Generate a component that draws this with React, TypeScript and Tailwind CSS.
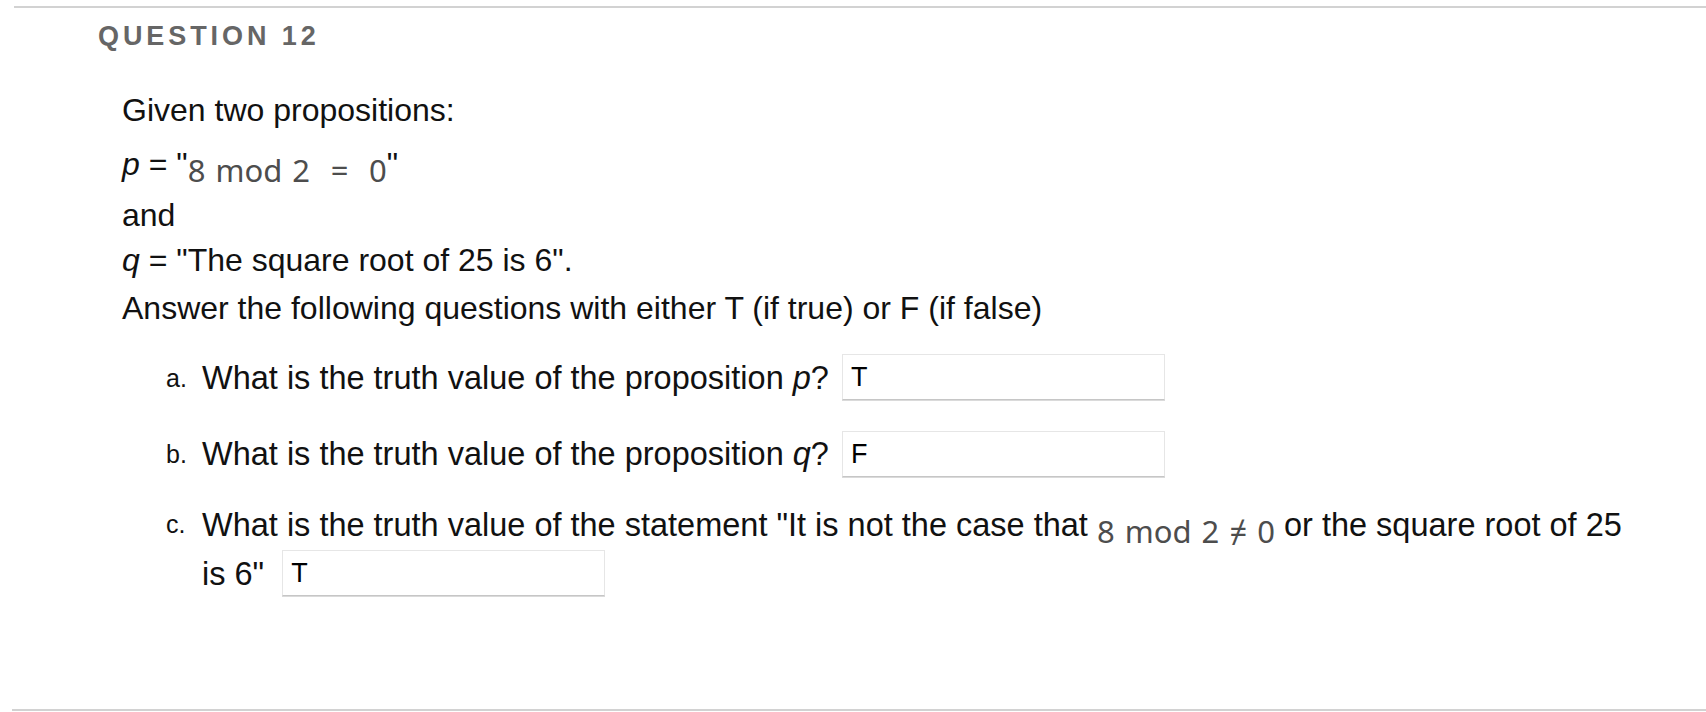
const MATH =
  "font-['Noto_Sans',sans-serif] text-[31px] text-[#4d4d4d] [word-spacing:2px] relative top-[7px]";

function Answer({ value, width }: { value: string; width: string }) {
  return (
    <span
      className={`inline-flex items-center h-[46px] ${width} border border-[#e6e6e6] border-b-[#c6c6c6] shadow-[0_1px_0_#dadada] bg-white pl-[8px] align-middle relative -top-[3px] text-[27px] text-black`}
    >
      {value}
    </span>
  );
}

export default function App() {
  return (
    <div className="w-[1706px] h-[712px] bg-white flex flex-col font-['Liberation_Sans',Arial,sans-serif] text-[#111]">
      {/* top rule */}
      <div className="ml-[14px] mt-[6px] h-[2px] bg-[#d2d2d2]" />

      <h2 className="pl-[98px] mt-[14px] text-[27px] leading-[28px] font-bold tracking-[0.145em] text-[#666]">
        QUESTION 12
      </h2>

      <div className="pl-[122px] mt-[36px] text-[32px] leading-[48px]">
        <p>Given two propositions:</p>
        <p className="mt-[5px]">
          <i>p</i> = "<span className={MATH}>8 mod 2&ensp;&thinsp;=&ensp;&thinsp;0</span>"
        </p>
        <p className="mt-[3px]">and</p>
        <p className="-mt-[3px]">
          <i>q</i> = "The square root of 25 is 6".
        </p>
        <p>Answer the following questions with either T (if true) or F (if false)</p>

        <ol className="mt-[22px] pl-[44px] w-[1515px] text-[32.5px]">
          <li className="flex">
            <span className="w-[36px] shrink-0 text-[25px]">a.</span>
            <span>
              What is the truth value of the proposition <i>p</i>?{" "}
              <span className="ml-[4px]">
                <Answer value="T" width="w-[323px]" />
              </span>
            </span>
          </li>
          <li className="flex mt-[27px]">
            <span className="w-[36px] shrink-0 text-[25px]">b.</span>
            <span>
              What is the truth value of the proposition <i>q</i>?{" "}
              <span className="ml-[4px]">
                <Answer value="F" width="w-[323px]" />
              </span>
            </span>
          </li>
          <li className="flex mt-[20px]">
            <span className="w-[36px] shrink-0 text-[25px]">c.</span>
            <span className="leading-[49px]">
              What is the truth value of the statement "It is not the case that{" "}
              <span className={MATH}>8 mod 2 ≠ 0</span> or the square root of 25 is 6"&nbsp;{" "}
              <Answer value="T" width="w-[323px]" />
            </span>
          </li>
        </ol>
      </div>

      <div className="flex-1" />
      {/* bottom rule */}
      <div className="ml-[12px] mb-[1px] h-[2px] bg-[#d2d2d2]" />
    </div>
  );
}
